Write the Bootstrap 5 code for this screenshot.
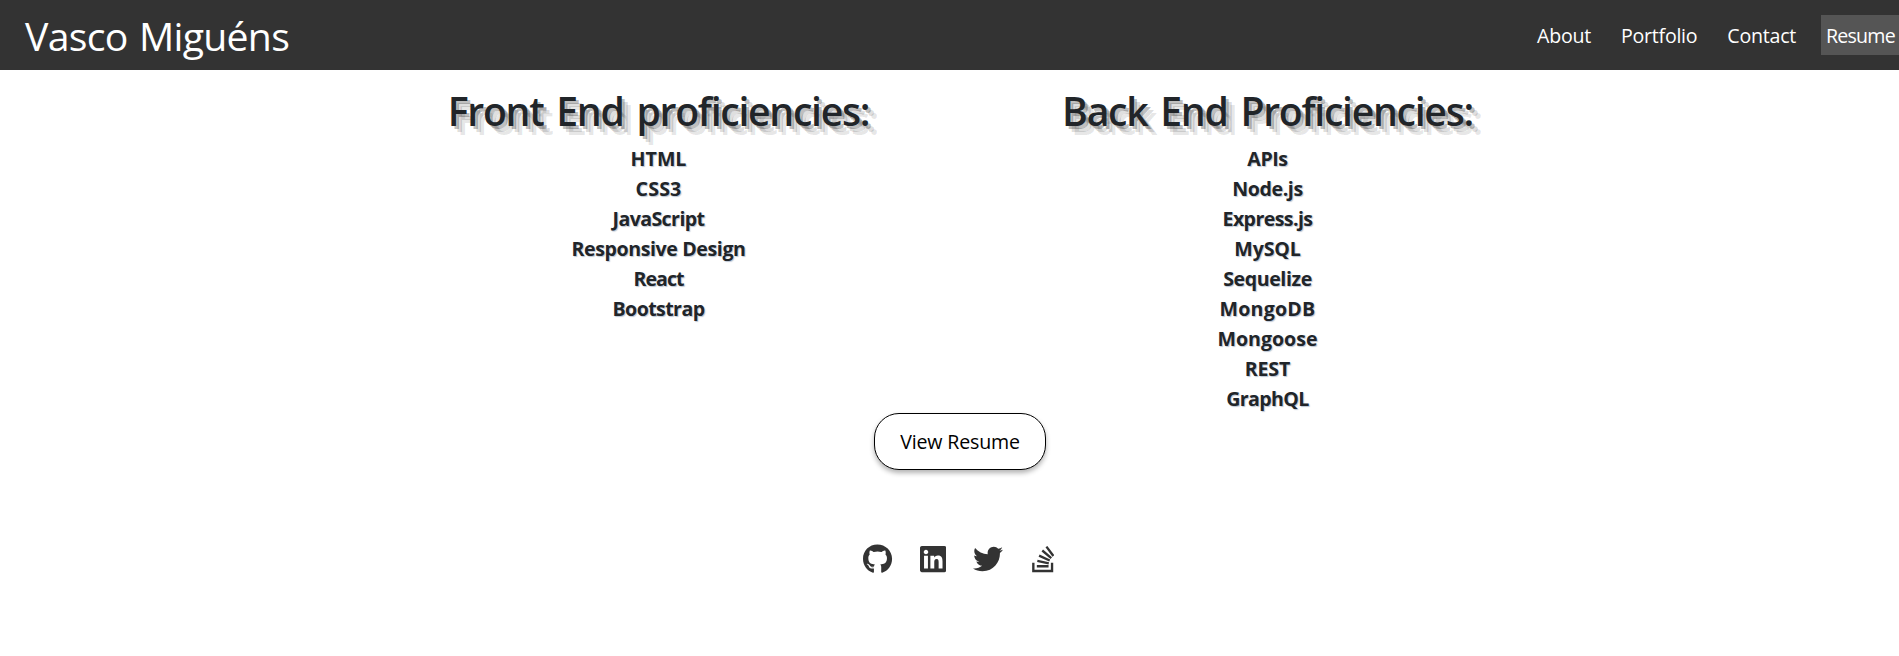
<!DOCTYPE html>
<html lang="en">
<head>
<meta charset="utf-8">
<meta name="viewport" content="width=device-width, initial-scale=1">
<title>Vasco Miguéns</title>
<link href="https://cdn.jsdelivr.net/npm/bootstrap@5.3.0/dist/css/bootstrap.min.css" rel="stylesheet">
<style>
body{font-family:"Open Sans","Noto Sans",sans-serif;font-size:19.6px;line-height:30px;background:#fff;overflow-x:hidden}
.site-bar{height:70px;background:#333;padding-left:25px}
.site-name{font-size:39.2px;letter-spacing:-.72px;word-spacing:2px;line-height:60px;color:#fff;padding-top:2px}
.site-links{gap:20px;letter-spacing:-.25px}
.site-links a{color:#fff;padding:6px 5px 4px;height:40px;text-decoration:none;white-space:nowrap}
.site-links a.current{background:#555;letter-spacing:-.78px;width:78px}
.skills{width:1218px;margin-left:354px;padding-top:17px}
.skills h1{font-size:39.2px;font-weight:600;line-height:48px;letter-spacing:-1.3px;word-spacing:4px;margin:0 0 9px;
 text-shadow:3px 3px 0 rgba(0,0,0,.25),6px 6px 0 rgba(0,0,0,.15),9px 9px 0 rgba(0,0,0,.1)}
.skills li{font-weight:700;text-shadow:1px 1px 1px rgba(60,90,130,.35)}
.tight-1{letter-spacing:-.15px}.tight-2{letter-spacing:-.4px}.tight-3{letter-spacing:-.6px}.tight-4{letter-spacing:-.95px}.loose{letter-spacing:.2px}
.lower{width:1920px;margin-top:-1px}
.resume-btn{width:172px;height:57px;border:1px solid #000;border-radius:25px;background:#fff;color:#000;font-size:19.6px;letter-spacing:-.18px;box-shadow:0 3px 5px rgba(0,0,0,.3)}
.social{gap:25px;margin-top:74px;padding-left:1px;color:#333}
.social a{color:#333;width:30px;height:30px}
.social svg{height:30px;fill:currentColor;display:block}
</style>
</head>
<body>
<header class="site-bar d-flex align-items-center justify-content-between">
  <div class="site-name">Vasco Miguéns</div>
  <nav class="site-links d-flex">
    <a href="#">About</a><a href="#">Portfolio</a><a href="#">Contact</a><a href="#" class="current">Resume</a>
  </nav>
</header>
<main>
  <section class="skills row g-0 text-center">
    <div class="col-6">
      <h1>Front End proficiencies:</h1>
      <ul class="list-unstyled mb-0">
        <li>HTML</li><li class="loose">CSS3</li><li class="tight-3">JavaScript</li><li class="tight-2">Responsive Design</li><li class="tight-4">React</li><li class="tight-3">Bootstrap</li>
      </ul>
    </div>
    <div class="col-6">
      <h1>Back End Proficiencies:</h1>
      <ul class="list-unstyled mb-0">
        <li class="tight-2">APIs</li><li class="tight-2">Node.js</li><li class="tight-3">Express.js</li><li class="tight-1">MySQL</li><li class="tight-2">Sequelize</li><li class="loose">MongoDB</li><li>Mongoose</li><li class="tight-1">REST</li><li class="tight-3">GraphQL</li>
      </ul>
    </div>
  </section>
  <div class="lower d-flex flex-column align-items-center">
    <button class="resume-btn" type="button">View Resume</button>
    <div class="social d-flex">
      <a href="#" class="d-flex justify-content-center" aria-label="GitHub"><svg viewBox="0 0 496 512"><path d="M165.9 397.4c0 2-2.3 3.6-5.2 3.6-3.3.3-5.6-1.3-5.6-3.6 0-2 2.3-3.6 5.2-3.6 3-.3 5.6 1.3 5.6 3.6zm-31.1-4.5c-.7 2 1.3 4.3 4.3 4.9 2.6 1 5.6 0 6.2-2s-1.3-4.3-4.3-5.2c-2.6-.7-5.5.3-6.2 2.3zm44.2-1.7c-2.9.7-4.9 2.6-4.6 4.9.3 2 2.9 3.3 5.9 2.6 2.9-.7 4.9-2.6 4.6-4.6-.3-1.9-3-3.2-5.9-2.9zM244.8 8C106.1 8 0 113.3 0 252c0 110.9 69.8 205.8 169.5 239.2 12.8 2.3 17.3-5.6 17.3-12.1 0-6.2-.3-40.4-.3-61.4 0 0-70 15-84.7-29.8 0 0-11.4-29.1-27.8-36.6 0 0-22.9-15.7 1.6-15.4 0 0 24.9 2 38.6 25.8 21.9 38.6 58.6 27.5 72.9 20.9 2.3-16 8.8-27.1 16-33.7-55.9-6.2-112.3-14.3-112.3-110.5 0-27.5 7.6-41.3 23.6-58.9-2.6-6.5-11.1-33.3 2.6-67.9 20.9-6.5 69 27 69 27 20-5.6 41.5-8.5 62.8-8.5s42.8 2.9 62.8 8.5c0 0 48.1-33.6 69-27 13.7 34.7 5.2 61.4 2.6 67.9 16 17.7 25.8 31.5 25.8 58.9 0 96.5-58.9 104.2-114.8 110.5 9.2 7.9 17 22.9 17 46.4 0 33.7-.3 75.4-.3 83.6 0 6.5 4.6 14.4 17.3 12.1C428.2 457.8 496 362.9 496 252 496 113.3 383.5 8 244.8 8z"/></svg></a>
      <a href="#" class="d-flex justify-content-center" aria-label="LinkedIn"><svg viewBox="0 0 448 512"><path d="M416 32H31.9C14.3 32 0 46.5 0 64.3v383.4C0 465.5 14.3 480 31.9 480H416c17.6 0 32-14.5 32-32.3V64.3c0-17.8-14.4-32.3-32-32.3zM135.4 416H69V202.2h66.5V416zm-33.2-243c-21.3 0-38.5-17.3-38.5-38.5S80.9 96 102.2 96c21.2 0 38.5 17.3 38.5 38.5 0 21.3-17.2 38.5-38.5 38.5zm282.1 243h-66.4V312c0-24.8-.5-56.7-34.5-56.7-34.6 0-39.9 27-39.9 54.9V416h-66.4V202.2h63.7v29.2h.9c8.9-16.8 30.6-34.5 62.9-34.5 67.2 0 79.7 44.3 79.7 101.9V416z"/></svg></a>
      <a href="#" class="d-flex justify-content-center" aria-label="Twitter"><svg viewBox="0 0 512 512"><path d="M459.37 151.716c.325 4.548.325 9.097.325 13.645 0 138.72-105.583 298.558-298.558 298.558-59.452 0-114.68-17.219-161.137-47.106 8.447.974 16.568 1.299 25.34 1.299 49.055 0 94.213-16.568 130.274-44.832-46.132-.975-84.792-31.188-98.112-72.772 6.498.974 12.995 1.624 19.818 1.624 9.421 0 18.843-1.3 27.614-3.573-48.081-9.747-84.143-51.98-84.143-102.985v-1.299c13.969 7.797 30.214 12.67 47.431 13.319-28.264-18.843-46.781-51.005-46.781-87.391 0-19.492 5.197-37.36 14.294-52.954 51.655 63.675 129.3 105.258 216.365 109.807-1.624-7.797-2.599-15.918-2.599-24.04 0-57.828 46.782-104.934 104.934-104.934 30.213 0 57.502 12.67 76.67 33.137 23.715-4.548 46.456-13.32 66.599-25.34-7.798 24.366-24.366 44.833-46.132 57.827 21.117-2.273 41.584-8.122 60.426-16.243-14.292 20.791-32.161 39.308-52.628 54.253z"/></svg></a>
      <a href="#" class="d-flex justify-content-center" aria-label="Stack Overflow"><svg viewBox="0 0 384 512"><path d="M290.7 311L95 269.7 86.8 309l195.7 41zm51-87L188.2 95.7l-25.5 30.8 153.5 128.3zm-31.2 39.7L129.2 179l-16.7 36.5L293.7 300zM262 32l-32 24 119.3 160.3 32-24zm20.5 328h-200v39.7h200zm39.7 80H42.7V320h-40v160h359.5V320h-40z"/></svg></a>
    </div>
  </div>
</main>
</body>
</html>
